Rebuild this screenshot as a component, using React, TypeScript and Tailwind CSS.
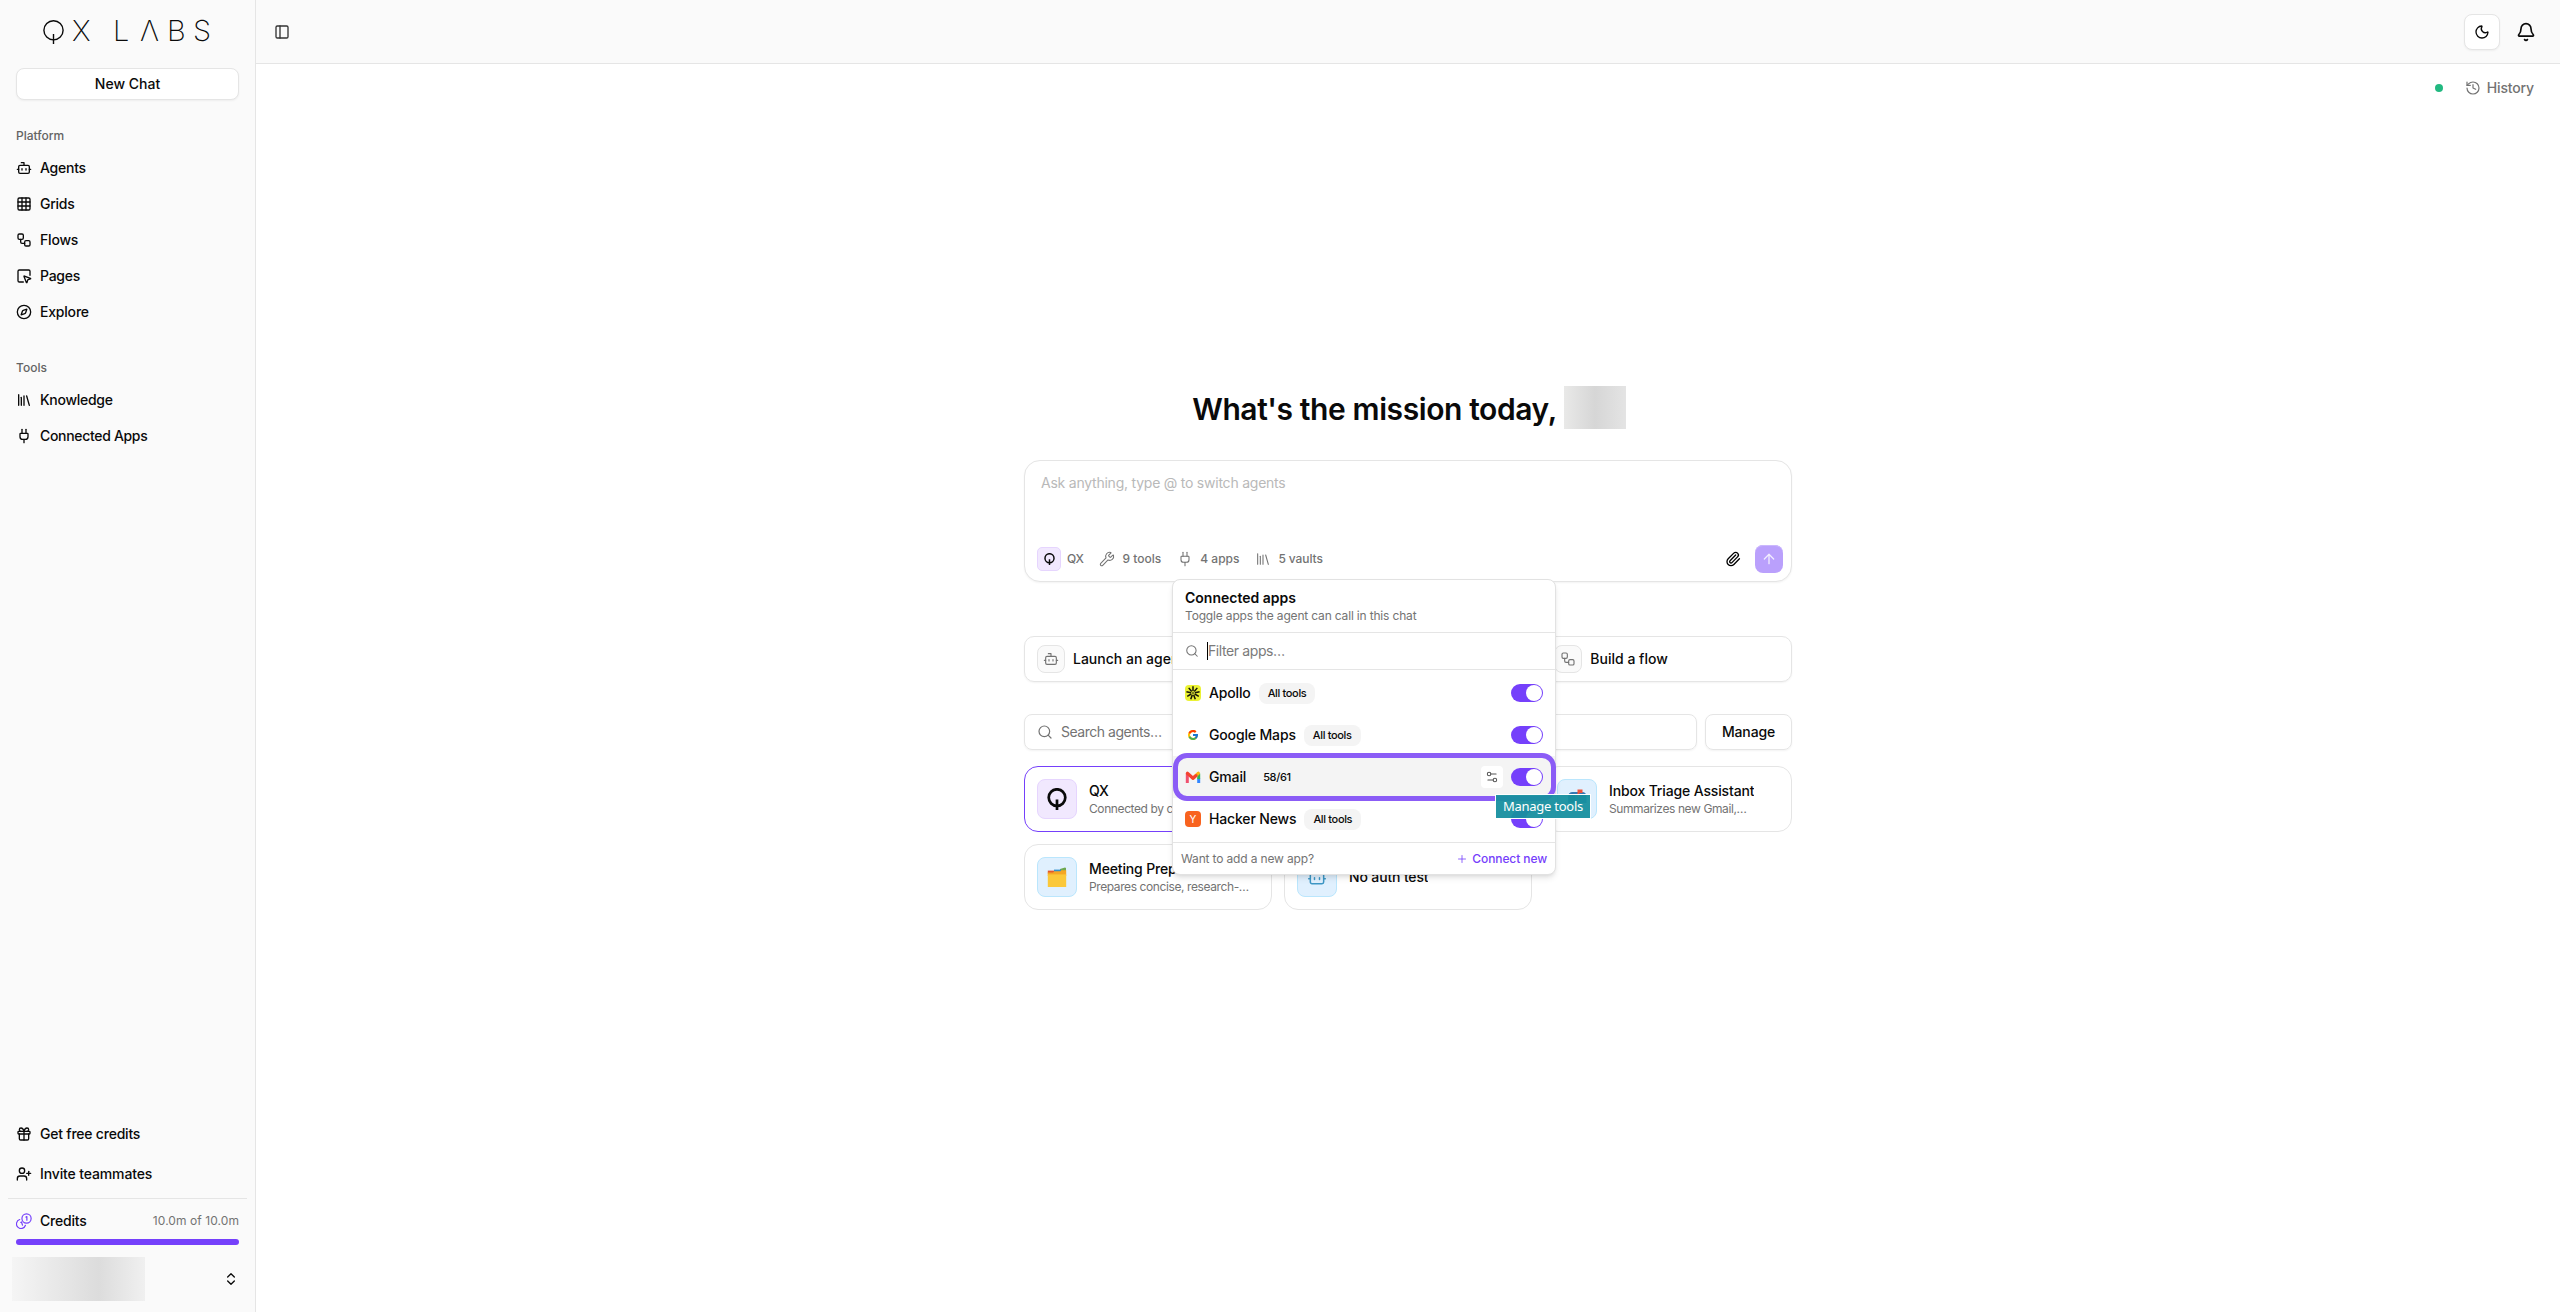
import React from 'react';
import {
  ArrowUp,
  Bell,
  Bot,
  ChevronsUpDown,
  Compass,
  Gift,
  Grid3x3,
  History,
  Library,
  Moon,
  PanelLeft,
  Paperclip,
  Plug,
  Plus,
  Search,
  Settings2,
  SquareMousePointer,
  UserPlus,
  Workflow,
  Wrench,
} from 'lucide-react';
import { FcGoogle } from 'react-icons/fc';

const platformLinks = [
  { label: 'Agents', icon: Bot, tracking: 'tracking-[-0.25px]' },
  { label: 'Grids', icon: Grid3x3, tracking: 'tracking-[-0.25px]' },
  { label: 'Flows', icon: Workflow, tracking: 'tracking-[-0.2px]' },
  { label: 'Pages', icon: SquareMousePointer, tracking: 'tracking-[-0.25px]' },
  { label: 'Explore', icon: Compass, tracking: 'tracking-[-0.2px]' },
];

const toolLinks = [
  { label: 'Knowledge', icon: Library, tracking: 'tracking-[-0.28px]' },
  { label: 'Connected Apps', icon: Plug, tracking: 'tracking-[-0.32px]' },
];

const footerLinks = [
  { label: 'Get free credits', icon: Gift, tracking: 'tracking-[-0.22px]' },
  { label: 'Invite teammates', icon: UserPlus, tracking: 'tracking-[-0.13px]' },
];

function QMark({ className }: { className?: string }) {
  return (
    <svg viewBox="0 0 20 22" fill="none" stroke="#0a0a0a" strokeWidth="2.7" className={className}>
      <circle cx="10" cy="9.6" r="8.3" />
      <path d="M10 11.5V22" />
    </svg>
  );
}

function CoinsIcon() {
  return (
    <svg viewBox="0 0 24 24" fill="none" stroke="currentColor" strokeWidth="1.8" strokeLinecap="round" strokeLinejoin="round" className="size-4 text-[#7540fb]">
      <circle cx="15.8" cy="8.2" r="6.9" />
      <path d="M5.6 9.8a6.9 6.9 0 1 0 8.6 8.6" />
      <path d="M15 6.2l1.3-.8v5.4M7.2 14.2l1-.7 1.5 4.6" />
    </svg>
  );
}

function ApolloIcon() {
  return (
    <svg viewBox="0 0 16 16" className="size-4">
      <rect width="16" height="16" rx="4" fill="#ebf233" />
      <g stroke="#141408" strokeWidth="1.5">
        {[0, 40, 80, 120, 160, 200, 240, 280, 320].map((a) => (
          <path key={a} d="M8 6V1.3" transform={`rotate(${a} 8 8)`} />
        ))}
      </g>
      <circle cx="8" cy="8" r="1.6" fill="#7b7f22" />
    </svg>
  );
}

function GmailIcon() {
  return (
    <svg viewBox="0 0 16 16" fill="none" className="size-4">
      <path d="M2.3 14V4.5" stroke="#f0506e" strokeWidth="3" />
      <path d="M13.7 14V9.5" stroke="#3186ff" strokeWidth="3" />
      <path d="M13.7 10V4.5" stroke="#2fb457" strokeWidth="3" />
      <path d="M8 9.2l5.4-4.9" stroke="#fbb414" strokeWidth="3.2" strokeLinecap="round" />
      <path d="M2.4 4.3L8 9.3l3-2.7" stroke="#f4432f" strokeWidth="3.2" strokeLinecap="round" strokeLinejoin="round" />
    </svg>
  );
}

function HackerNewsIcon() {
  return (
    <span className="flex size-4 items-center justify-center rounded-[4px] bg-[#f8631f] text-[10px] leading-none text-white">
      Y
    </span>
  );
}

function DividersIcon() {
  return (
    <svg viewBox="0 0 20 20" className="size-5">
      <path d="M13 2l5-1.6 1 .6v3h-6z" fill="#6fa84f" />
      <path d="M7 2.6h7v3H7z" fill="#2f8fd0" />
      <path d="M.8 3.6H7v3H.8z" fill="#e2572f" />
      <path d="M.8 5.4h5.4l1-1.2h6.4l.8-1h4.8V9H.8z" fill="#f5a623" />
      <path d="M.8 7.4h18.4V20H.8z" fill="#fbc83a" />
    </svg>
  );
}

function MailboxIcon() {
  return (
    <svg viewBox="0 0 20 20" className="size-5">
      <path d="M1 14V7.5C1 4.5 3 3 5.5 3H15c3 0 4.5 2 4.5 4.5V14z" fill="#3478b4" />
      <path d="M2.2 13V7.8a3 3 0 0 1 6 0V13z" fill="#27567f" />
      <path d="M8 14h3.5v6H8z" fill="#8a6b5c" />
      <path d="M10.5.4h5V4h-3.2v4h-1.8z" fill="#f0543c" />
    </svg>
  );
}

const apps = [
  { name: 'Apollo', badge: 'All tools', icon: <ApolloIcon /> },
  { name: 'Google Maps', badge: 'All tools', icon: <FcGoogle className="size-3" /> },
  { name: 'Gmail', badge: '58/61', icon: <GmailIcon />, active: true },
  { name: 'Hacker News', badge: 'All tools', icon: <HackerNewsIcon /> },
];

function NavItem({ item }: { item: (typeof platformLinks)[number] }) {
  const Icon = item.icon;
  return (
    <a className="flex h-9 items-center gap-2 px-4 text-sm font-[450]">
      <Icon className="size-4" />
      <span className={item.tracking}>{item.label}</span>
    </a>
  );
}

function Sidebar() {
  return (
    <aside className="flex h-full w-64 shrink-0 flex-col border-r border-[#e5e5e5] bg-[#fafafa]">
      {/* Wordmark */}
      <div className="flex h-[68px] items-start pt-[13px] pl-[43px] text-[29px] leading-[36px] font-extralight">
        <span className="w-[29px]">
          <svg viewBox="0 0 21 25" fill="none" stroke="#0a0a0a" strokeWidth="1.4" className="mt-[7px] h-[25px] w-[21px]">
            <circle cx="10.5" cy="10.3" r="9.6" />
            <path d="M10.5 14v10" />
          </svg>
        </span>
        <span className="w-[41px]">X</span>
        <span className="w-[27px]">L</span>
        <span className="w-[27px]">Λ</span>
        <span className="w-[26px]">B</span>
        <span>S</span>
      </div>

      <div className="px-4">
        <button className="block h-8 w-full rounded-lg border border-[#e5e5e5] bg-white text-sm font-medium shadow-xs">New Chat</button>
      </div>

      <div className="mt-5 flex h-8 items-center px-4 text-xs font-medium text-[#636363]">Platform</div>
      <nav className="-mt-0.5">
        {platformLinks.map((item) => <NavItem key={item.label} item={item} />)}
      </nav>
      <div className="mt-[22px] flex h-8 items-center px-4 text-xs font-medium text-[#636363]">Tools</div>
      <nav className="-mt-0.5">
        {toolLinks.map((item) => <NavItem key={item.label} item={item} />)}
      </nav>

      <div className="mt-auto flex flex-col gap-1">
        {footerLinks.map((item) => <NavItem key={item.label} item={item} />)}
      </div>
      <div className="mx-2 mt-[6px] border-t border-[#e5e5e5]" />
      <div className="mt-[10px] flex h-6 items-center gap-2 px-4">
        <CoinsIcon />
        <span className="text-sm font-[450] tracking-[-0.2px]">Credits</span>
        <span className="ml-auto text-xs tracking-[0.07px] text-[#737373]">10.0m of 10.0m</span>
      </div>
      <div className="mx-4 mt-[6px] h-1.5 shrink-0 rounded-full bg-[#7540fb]" />
      <div className="mt-3 mb-[11px] flex h-11 items-center justify-between pr-4 pl-3">
        <div className="h-11 w-[133px] bg-linear-to-r from-[#f5f5f5] via-[#dcdcdc] via-65% to-[#f0f0f0]" />
        <ChevronsUpDown className="size-4" />
      </div>
    </aside>
  );
}

function Toggle() {
  return (
    <span className="flex h-[18px] w-8 shrink-0 items-center justify-end rounded-full bg-[#7540fb] p-px">
      <span className="size-4 rounded-full bg-white" />
    </span>
  );
}

function AppsPopover() {
  return (
    <div className="absolute top-[118px] left-[147px] h-[296px] w-96 rounded-lg border border-[#e2e2e2] bg-white shadow-md">
      <div className="flex h-[53px] flex-col justify-center border-b border-[#e5e5e5] px-3">
        <div className="text-sm leading-[19px] font-semibold">Connected apps</div>
        <div className="text-xs leading-[17px] tracking-[-0.17px] text-[#737373]">Toggle apps the agent can call in this chat</div>
      </div>
      <div className="flex h-[37px] items-center border-b border-[#e5e5e5] px-3">
        <Search className="size-3.5 text-[#737373]" strokeWidth={1.8} />
        <span className="ml-2 h-[18px] w-px bg-black" />
        <span className="text-sm tracking-[-0.4px] text-[#7a7a7a]">Filter apps…</span>
      </div>
      <div className="h-[172px] py-0.5">
        {apps.map((app) => (
          <div key={app.name} className={`flex h-[42px] items-center px-3 ${app.active ? 'bg-[#f4f4f4]' : ''}`}>
            <span className="flex size-4 items-center justify-center">{app.icon}</span>
            <span className="ml-2 text-sm font-medium tracking-[-0.15px]">{app.name}</span>
            <span className="ml-2 flex h-[21px] items-center rounded-lg bg-[#f4f4f4] px-[9px] text-[11px] font-medium tracking-[-0.35px]">{app.badge}</span>
            <span className="ml-auto flex items-center gap-2">
              {app.active && (
                <span className="flex size-[22px] items-center justify-center rounded-[4px] bg-white text-[#555]">
                  <Settings2 className="size-3.5" strokeWidth={1.8} />
                </span>
              )}
              <Toggle />
            </span>
          </div>
        ))}
      </div>
      <div className="flex h-8 items-center justify-between border-t border-[#e5e5e5] px-2 text-xs">
        <span className="tracking-[-0.15px] text-[#737373]">Want to add a new app?</span>
        <span className="flex items-center gap-1 font-medium tracking-[-0.1px] text-[#7540fb]">
          <Plus className="size-3" strokeWidth={1.6} />
          Connect new
        </span>
      </div>

      {/* Focus ring round the hovered row */}
      <div className="absolute top-[173px] left-0 h-12 w-[383px] rounded-[14px] border-[5px] border-[#8b5cf6]" />
      <div className="absolute top-[214px] left-[322px] flex h-[25px] w-24 items-center justify-center border border-white bg-[#178f9f]/95 font-['Noto_Sans'] text-[13px] tracking-[-0.25px] text-white">
        Manage tools
      </div>
    </div>
  );
}

function Composer() {
  return (
    <section className="relative mt-[31px] flex h-[122px] flex-col rounded-2xl border border-[#e5e5e5] bg-white shadow-xs">
      <p className="px-4 pt-3 text-sm tracking-[-0.23px] text-[#b9b9b9]">Ask anything, type @ to switch agents</p>
      <div className="mt-auto mb-2 flex h-7 items-center px-3 text-xs font-medium text-[#737373]">
        <span className="flex size-6 items-center justify-center rounded-[5px] border border-[#e6d5fe] bg-[#f1e8fe]">
          <QMark className="h-3 w-[11px]" />
        </span>
        <span className="ml-1.5 tracking-[-0.3px]">QX</span>
        <Wrench className="ml-[15px] size-4" strokeWidth={1.6} />
        <span className="ml-2">9 tools</span>
        <Plug className="ml-4 size-4" strokeWidth={1.6} />
        <span className="ml-[7px]">4 apps</span>
        <Library className="ml-4 size-4" strokeWidth={1.6} />
        <span className="ml-[7px] tracking-[-0.1px]">5 vaults</span>
        <Paperclip className="ml-auto size-4 text-black" />
        <span className="-mr-1 ml-[14px] flex size-7 items-center justify-center rounded-lg bg-[#baa0fc] text-white shadow-[inset_0_1px_0_#cbb8fd]">
          <ArrowUp className="size-4 opacity-80" />
        </span>
      </div>
      <AppsPopover />
    </section>
  );
}

function QuickAction({ icon: Icon, label }: { icon: typeof Bot; label: string }) {
  return (
    <div className="flex h-[46px] items-center rounded-[10px] border border-[#e5e5e5] px-3 shadow-xs">
      <span className="flex size-7 items-center justify-center rounded-lg border border-[#e5e5e5] bg-[#fafafa] text-[#737373]">
        <Icon className="size-4" strokeWidth={1.7} />
      </span>
      <span className="ml-2 text-sm font-medium">{label}</span>
    </div>
  );
}

type AgentCardProps = {
  title: string;
  desc?: string;
  icon: React.ReactNode;
  tone?: string;
  selected?: boolean;
};

function AgentCard({ title, desc, icon, tone = 'border-[#bae6fd] bg-[#e0f0fe]', selected }: AgentCardProps) {
  return (
    <div className={`flex h-[66px] items-center rounded-[14px] border px-3 ${selected ? 'border-[#7540fb]' : 'border-[#e5e5e5]'}`}>
      <span className={`flex size-10 shrink-0 items-center justify-center rounded-lg border ${tone}`}>{icon}</span>
      <div className="ml-3 min-w-0">
        <div className="truncate text-sm leading-[18px] font-medium tracking-[-0.15px]">{title}</div>
        {desc && <div className="text-xs leading-[17px] tracking-[-0.4px] whitespace-nowrap text-[#737373]">{desc}</div>}
      </div>
    </div>
  );
}

export default function App() {
  return (
    <div className="flex h-screen w-full overflow-hidden bg-white font-['Inter',sans-serif] text-[#0a0a0a]">
      <Sidebar />
      <div className="flex min-w-0 flex-1 flex-col">
        <header className="flex h-16 shrink-0 items-center justify-between border-b border-[#e5e5e5] bg-[#fafafa] pr-6 pl-[18px]">
          <PanelLeft className="size-4 text-[#333]" />
          <div className="flex items-center gap-4">
            <span className="flex size-9 items-center justify-center rounded-lg border border-[#e5e5e5] bg-white shadow-xs">
              <Moon className="size-4" />
            </span>
            <Bell className="size-5" />
          </div>
        </header>

        <div className="flex h-12 shrink-0 items-center justify-end pr-[26px] text-[#737373]">
          <span className="mr-[22px] size-2 rounded-full bg-[#22b981]" />
          <History className="size-4" strokeWidth={1.8} />
          <span className="ml-1.5 text-sm font-medium tracking-[-0.15px]">History</span>
        </div>

        <main className="mx-auto mt-[274px] w-3xl">
          <div className="flex h-[43px] items-center justify-center gap-[7px] pl-[2px]">
            <h1 className="pt-[3px] text-3xl font-semibold tracking-[-0.4px]">What's the mission today,</h1>
            <span className="h-[43px] w-[62px] bg-linear-to-r from-[#e9e9e8] via-[#d6d6d6] to-[#e4e4e4]" />
          </div>

          <Composer />

          <div className="mt-[54px] grid grid-cols-3 gap-2">
            <QuickAction icon={Bot} label="Launch an agent" />
            <div className="h-[46px] rounded-[10px] border border-[#e5e5e5]" />
            <QuickAction icon={Workflow} label="Build a flow" />
          </div>

          <div className="mt-8 flex gap-2">
            <div className="flex h-9 flex-1 items-center rounded-lg border border-[#e5e5e5] px-3 text-sm text-[#737373] shadow-xs">
              <Search className="size-4" strokeWidth={1.8} />
              <span className="ml-2 tracking-[-0.47px]">Search agents…</span>
            </div>
            <button className="h-9 w-[87px] rounded-lg border border-[#e5e5e5] text-sm font-medium tracking-[-0.15px] shadow-xs">Manage</button>
          </div>

          <div className="mt-4 grid grid-cols-3 gap-3">
            <AgentCard title="QX" desc="Connected by c" selected tone="border-[#e6d5fe] bg-[#f1e8fe]" icon={<QMark className="h-[22px] w-5" />} />
            <div className="h-[66px] rounded-[14px] border border-[#e5e5e5]" />
            <AgentCard title="Inbox Triage Assistant" desc="Summarizes new Gmail,…" icon={<MailboxIcon />} />
            <AgentCard title="Meeting Prep" desc="Prepares concise, research-…" icon={<DividersIcon />} />
            <AgentCard title="No auth test" icon={<Bot className="size-5 text-[#3d97c5]" strokeWidth={1.8} />} />
          </div>
        </main>
      </div>
    </div>
  );
}
